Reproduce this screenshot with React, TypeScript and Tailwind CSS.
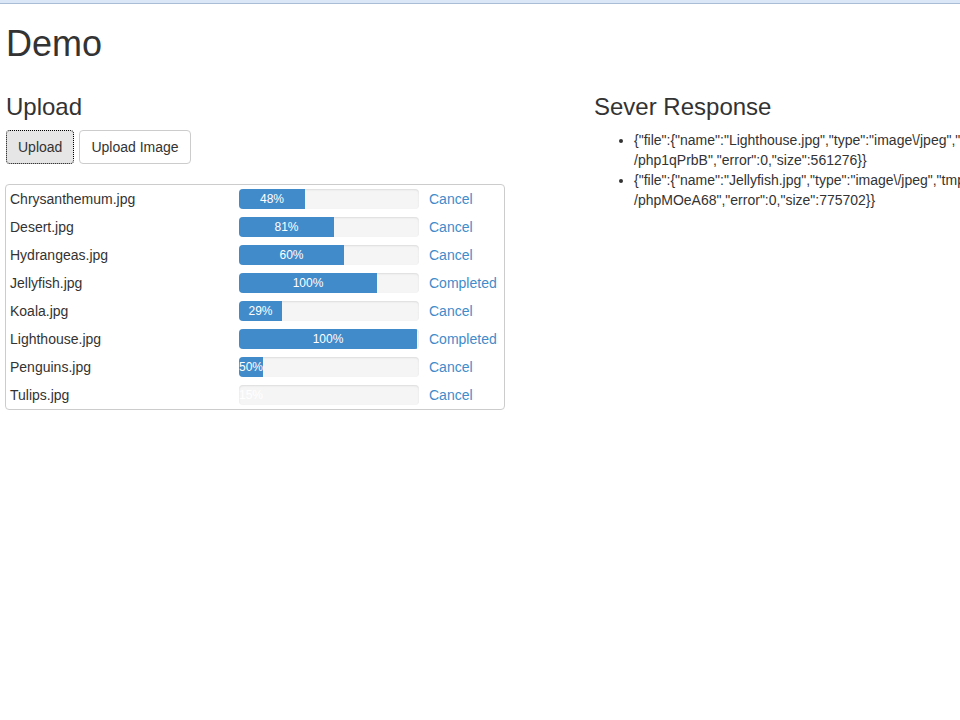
const files = [
  { name: 'Chrysanthemum.jpg', pct: 48, fill: 66, done: false },
  { name: 'Desert.jpg', pct: 81, fill: 95, done: false },
  { name: 'Hydrangeas.jpg', pct: 60, fill: 105, done: false },
  { name: 'Jellyfish.jpg', pct: 100, fill: 138, done: true },
  { name: 'Koala.jpg', pct: 29, fill: 43, done: false },
  { name: 'Lighthouse.jpg', pct: 100, fill: 178, done: true },
  { name: 'Penguins.jpg', pct: 50, fill: 24, done: false },
  { name: 'Tulips.jpg', pct: 15, fill: 0, done: false },
];

const responses = [
  {
    head: '{"file":{"name":"Lighthouse.jpg","type":"image\\/jpeg","tmp_name":"\\/tmp\\',
    tail: '/php1qPrbB","error":0,"size":561276}}',
  },
  {
    head: '{"file":{"name":"Jellyfish.jpg","type":"image\\/jpeg","tmp_name":"\\/tmp\\',
    tail: '/phpMOeA68","error":0,"size":775702}}',
  },
];

function FileRow({ name, pct, fill, done }: (typeof files)[number]) {
  return (
    <div className="flex h-[28px] items-center">
      <div className="w-[233px] pl-[4px]">{name}</div>
      <div className="h-[20px] w-[180px] overflow-hidden rounded-[4px] bg-[#f5f5f5] shadow-[inset_0_1px_2px_rgba(0,0,0,0.1)]">
        <div
          className="h-full whitespace-nowrap bg-[#428bca] text-center text-[12px] leading-[20px] text-white"
          style={{ width: fill }}
        >
          {pct}%
        </div>
      </div>
      <a href="#" className="ml-[10px] text-[#428bca]">
        {done ? 'Completed' : 'Cancel'}
      </a>
    </div>
  );
}

export default function App() {
  return (
    <div
      className="min-h-screen overflow-hidden bg-white text-[14px] leading-[20px] text-[#333]"
      style={{ fontFamily: '"Liberation Sans", Arial, sans-serif' }}
    >
      <div className="h-[4px] border-b border-[#a9bdd6] bg-[#dbe7f6]" />
      <div className="w-[1176px] pl-[6px]">
        <h1 className="mt-[20px] mb-[10px] text-[36px] leading-[1.1]">Demo</h1>
        <div className="grid grid-cols-[588px_588px]">
          <div>
            <h3 className="mt-[20px] mb-[10px] text-[24px] leading-[1.1]">Upload</h3>
            <div className="flex gap-[5px]">
              <button className="h-[34px] rounded-[4px] border border-dotted border-black bg-[#e6e6e6] px-[11px]">
                Upload
              </button>
              <button className="h-[34px] rounded-[4px] border border-[#ccc] bg-white px-[11px]">
                Upload Image
              </button>
            </div>
            <div className="mt-[20px] -ml-px w-[500px] rounded-[4px] border border-[#ccc]">
              {files.map((f) => (
                <FileRow key={f.name} {...f} />
              ))}
            </div>
          </div>
          <div>
            <h3 className="mt-[20px] mb-[10px] text-[24px] leading-[1.1]">Sever Response</h3>
            <ul className="list-disc pl-[40px]">
              {responses.map((r) => (
                <li key={r.tail}>
                  <span className="whitespace-nowrap">{r.head}</span>
                  <br />
                  {r.tail}
                </li>
              ))}
            </ul>
          </div>
        </div>
      </div>
    </div>
  );
}
